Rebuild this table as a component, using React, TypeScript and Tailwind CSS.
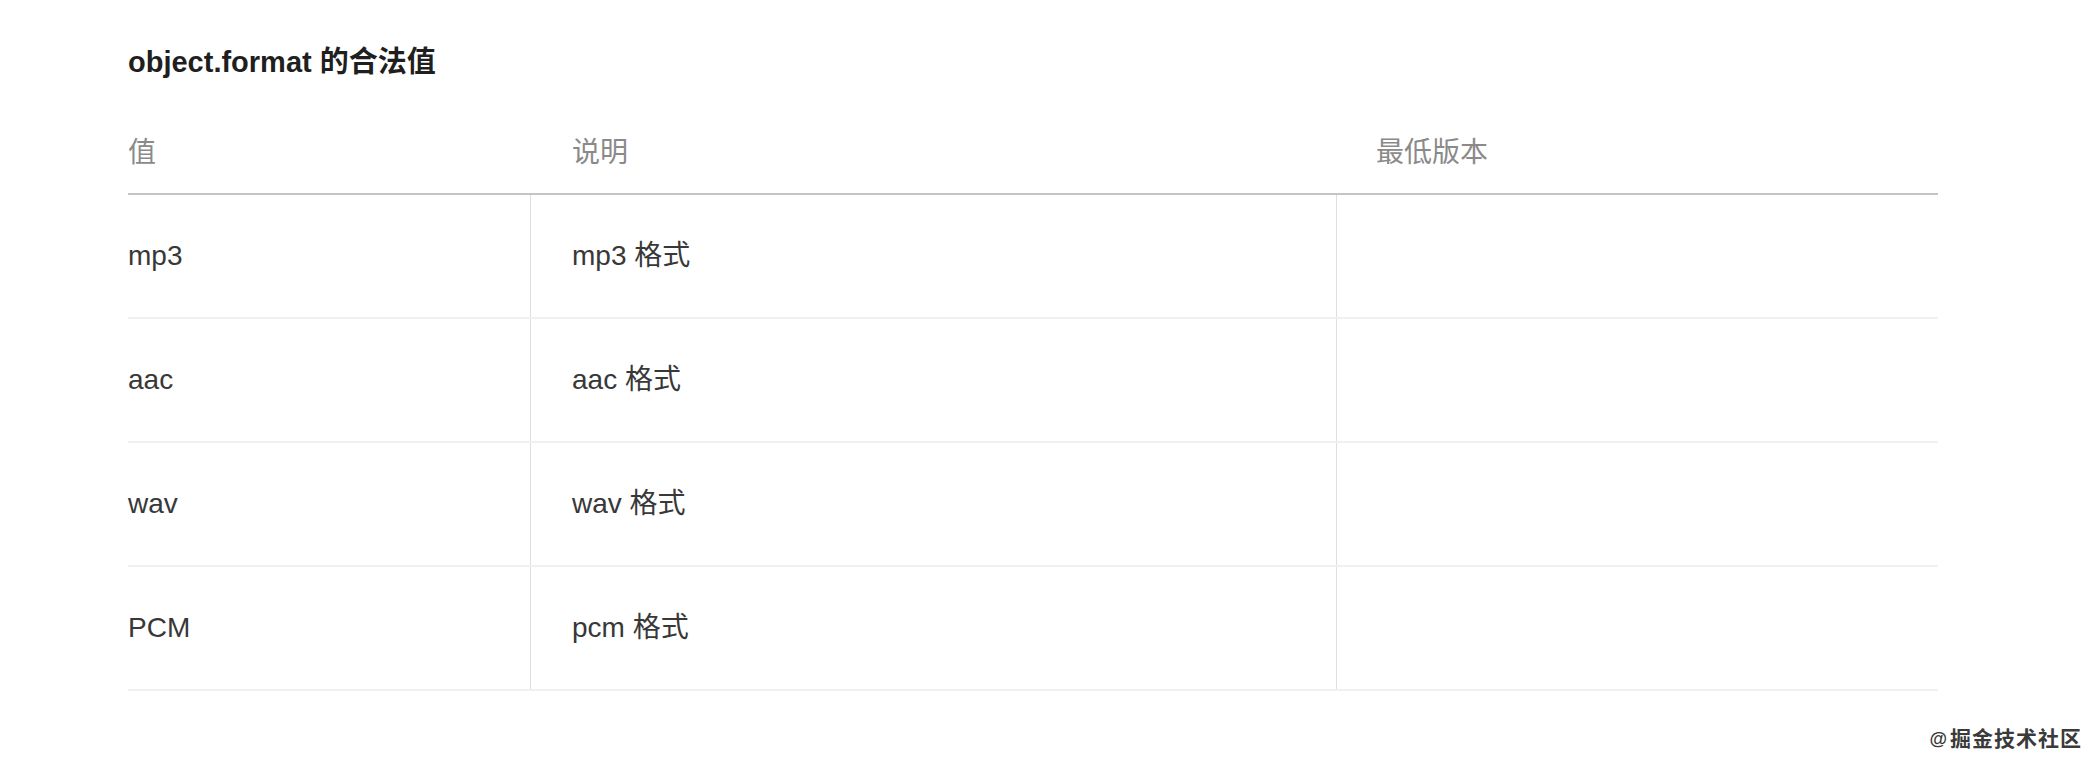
const rows = [
  { value: "mp3", desc: "mp3 格式", version: "" },
  { value: "aac", desc: "aac 格式", version: "" },
  { value: "wav", desc: "wav 格式", version: "" },
  { value: "PCM", desc: "pcm 格式", version: "" },
];

const font = "font-['Liberation_Sans','Noto_Sans_CJK_SC',sans-serif]";

export default function App() {
  return (
    <div className={`relative h-[762px] w-[2100px] bg-white ${font}`}>
      <div className="pl-[128px] pt-[42px]">
        {/* Title */}
        <h3 className="text-[29px] font-bold leading-[40px] text-[#1f1f1f]">
          object.format 的合法值
        </h3>

        {/* Table */}
        <div className="mt-[31px] w-[1810px]">
          <div className="grid grid-cols-[402px_806px_602px] border-b-2 border-[#c4c4c4] text-[28px] text-[#8a8a8a]">
            <div className="flex h-[80px] items-center">值</div>
            <div className="flex h-[80px] items-center pl-[42px]">说明</div>
            <div className="flex h-[80px] items-center pl-10">最低版本</div>
          </div>
          {rows.map((r) => (
            <div
              key={r.value}
              className="grid grid-cols-[402px_806px_602px] border-b-2 border-[#f0f0f0] text-[28px] text-[#383838]"
            >
              <div className="flex h-[122px] items-center">{r.value}</div>
              <div className="flex h-[122px] items-center border-l border-[#dedede] pl-[41px]">
                {r.desc}
              </div>
              <div className="flex h-[122px] items-center border-l border-[#dedede] pl-10">
                {r.version}
              </div>
            </div>
          ))}
        </div>
      </div>

      {/* Watermark */}
      <div className="absolute bottom-[13px] right-[18px] flex items-center gap-[3px] text-[21px] font-bold leading-none text-[#3a3a3a] [text-shadow:0_0_2px_#fff,0_0_2px_#fff]">
        <span className="text-[18px]">@</span>
        <span className="tracking-[1px]">掘金技术社区</span>
      </div>
    </div>
  );
}
